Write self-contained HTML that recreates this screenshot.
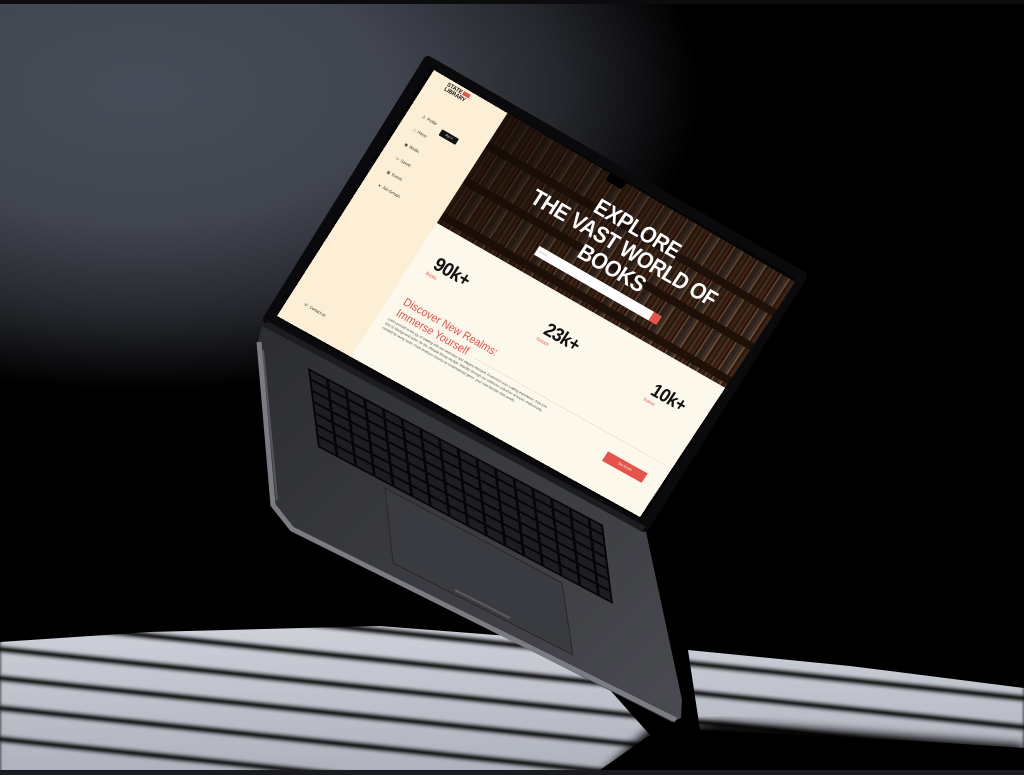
<!DOCTYPE html>
<html><head><meta charset="utf-8"><style>
html,body{margin:0;padding:0;background:#000;}
#root{position:relative;width:1024px;height:775px;overflow:hidden;font-family:"Liberation Sans",sans-serif;
background:radial-gradient(ellipse 560px 300px at 140px 90px,#474c58 0%,#41454f 45%,#25272d 75%,#000 100%),#000;}
svg{position:absolute;left:0;top:0;}
#kb{position:absolute;left:0;top:0;width:300px;height:80px;transform-origin:0 0;
transform:matrix(0.983,0.523,0.125,0.9875,308,368);
background-color:#1d1e21;
background-image:repeating-linear-gradient(90deg,transparent 0 16px,#060607 16px 19px),repeating-linear-gradient(0deg,transparent 0 9px,#060607 9px 11.4px);
border:2px solid #060607;box-sizing:border-box;}
#scr{position:absolute;left:0;top:0;width:800px;height:500px;transform-origin:0 0;
transform:matrix3d(0.48875,0.2783,0,0.000047175,-0.30812,0.4987,0,0.00002121,0,0,1,0,434,70,0,1);background:#fdf8ec;overflow:hidden;}
#side{position:absolute;left:0;top:0;width:158px;height:500px;background:#fcefd6;}
#hero{position:absolute;left:158px;top:0;width:642px;height:224px;
background:
linear-gradient(135deg,rgba(20,10,5,.85) 0%,rgba(25,12,6,.6) 50%,rgba(25,12,6,.4) 100%),
repeating-linear-gradient(180deg,transparent 0 58px,#24150a 58px 72px),
repeating-linear-gradient(90deg,#5a3a22 0 6px,#2b1a10 6px 9px,#6e5236 9px 14px,#3d2a1a 14px 18px,#7a3828 18px 22px,#2a1a10 22px 26px,#9c8260 26px 29px,#4a3020 29px 35px,#2f3f4a 35px 39px,#6a4a30 39px 45px,#a89070 45px 48px,#3a2418 48px 53px);}
.t{position:absolute;white-space:nowrap;}
</style></head><body><div id="root">
<svg width="1024" height="775" viewBox="0 0 1024 775">
<defs>
<filter id="b6"><feGaussianBlur stdDeviation="5"/></filter>
<filter id="b2"><feGaussianBlur stdDeviation="1.5"/></filter>
<linearGradient id="fl" x1="0" y1="0" x2="0" y2="1"><stop offset="0" stop-color="#d3d6de"/><stop offset="1" stop-color="#aeb2bc"/></linearGradient>
<linearGradient id="deck" x1="0" y1="0" x2="1" y2="1"><stop offset="0" stop-color="#2c2d31"/><stop offset=".6" stop-color="#3d3e43"/><stop offset="1" stop-color="#4a4b50"/></linearGradient>
<clipPath id="lc"><polygon points="0,642 150,632 380,626 560,640 610,690 650,735 600,770 0,770"/><polygon points="688,650 850,666 1024,688 1024,748 900,740 700,730"/></clipPath>
</defs>
<rect x="0" y="0" width="1024" height="4" fill="#0c0c0e"/>
<g clip-path="url(#lc)" filter="url(#b2)">
<rect x="0" y="600" width="1024" height="175" fill="url(#fl)"/>
<g stroke="#0b0b0d" stroke-width="7">
<line x1="-20" y1="647" x2="1040" y2="758"/>
<line x1="-20" y1="676" x2="1040" y2="787"/>
<line x1="-20" y1="706" x2="1040" y2="817"/>
<line x1="-20" y1="737" x2="1040" y2="848"/>
<line x1="-20" y1="618" x2="1040" y2="729"/>
<line x1="-20" y1="589" x2="1040" y2="700"/>
</g>
</g>
<polygon points="600,775 650,728 720,722 1024,745 1024,775" fill="#030304" filter="url(#b6)"/>
<rect x="0" y="770" width="1024" height="5" fill="#1a1b1e"/>
<polygon points="262,326 257,345 272,505 292,530 672,722 681,718 682,700 645,527" fill="url(#deck)"/>
<path d="M259,342 L273,505 L292,529 L676,720" fill="none" stroke="#7b7c83" stroke-width="5" stroke-linejoin="round"/>
<path d="M263,350 L277,500" stroke="#55565c" stroke-width="2"/>
<polygon points="385,488 393,563 573,655 562,583" fill="#3a3b40" stroke="#27282c" stroke-width="1"/>
<path d="M455,590 L510,618" stroke="#5a5b60" stroke-width="2"/>
<polygon points="428,61 802,276 644,527 268,319" fill="#050506" stroke="#0a0a0c" stroke-width="10" stroke-linejoin="round"/>
<path d="M266,324 L644,529" stroke="#1c1d20" stroke-width="6"/>
</svg>
<div id="kb"></div>
<div id="scr">
<div id="side">
<div class="t" style="left:35px;top:5px;font-weight:bold;font-size:10px;line-height:9px;color:#111;">STATE<span style="display:inline-block;width:14px;height:7px;background:#e5534b;margin-left:2px;"></span><br>LIBRARY</div>
<div class="t" style="left:28px;top:74px;font-size:7px;color:#333;">♙&nbsp; Profile</div>
<div class="t" style="left:28px;top:102px;font-size:7px;color:#333;">⌂&nbsp; Home</div>
<div class="t" style="left:28px;top:130px;font-size:7px;color:#333;">▣&nbsp; Books</div>
<div class="t" style="left:28px;top:158px;font-size:7px;color:#333;">▭&nbsp; Saved</div>
<div class="t" style="left:28px;top:186px;font-size:7px;color:#333;">▦&nbsp; Events</div>
<div class="t" style="left:28px;top:214px;font-size:7px;color:#333;">●&nbsp; Join Groups</div>
<div class="t" style="left:72px;top:80px;width:36px;height:12px;background:#111;border-radius:2px;color:#eee;font-size:5px;line-height:12px;text-align:center;">Sign in</div>
<div class="t" style="left:30px;top:455px;font-size:7px;color:#333;">☏&nbsp; Contact us</div>
</div>
<div id="hero"></div>
<div class="t" style="left:180px;top:39px;width:610px;text-align:center;color:#fff;font-weight:bold;font-size:40px;line-height:41px;letter-spacing:-1px;">EXPLORE<br>THE VAST WORLD OF<br>BOOKS</div>
<div class="t" style="left:345px;top:170px;width:255px;height:18px;background:#fff;font-size:5px;color:#aaa;line-height:18px;padding-left:6px;box-sizing:border-box;">Search</div>
<div class="t" style="left:600px;top:170px;width:18px;height:18px;background:#e5534b;"></div>
<div class="t" style="left:196px;top:266px;font-weight:bold;font-size:34px;color:#111;letter-spacing:-1px;">90k+</div>
<div class="t" style="left:192px;top:304px;font-size:8px;color:#e5534b;">Books</div>
<div class="t" style="left:441px;top:270px;font-weight:bold;font-size:34px;color:#111;letter-spacing:-1px;">23k+</div>
<div class="t" style="left:437px;top:308px;font-size:8px;color:#e5534b;">Groups</div>
<div class="t" style="left:681px;top:270px;font-weight:bold;font-size:34px;color:#111;letter-spacing:-1px;">10k+</div>
<div class="t" style="left:677px;top:308px;font-size:8px;color:#e5534b;">Events</div>
<div class="t" style="left:186px;top:359px;font-size:20px;line-height:23px;color:#e5534b;">Discover New Realms:<br>Immerse Yourself</div>
<div class="t" style="left:178px;top:406px;width:360px;white-space:normal;font-size:6.5px;line-height:9px;color:#555;">Lose yourself in the joy of reading with our seamless and elegant interface. Customize your reading experience, from font size to background color, for the ultimate library escape. Wander through our extensive collection of books, meticulously curated for every taste. From timeless classics to contemporary gems, your next favorite read awaits.</div>
<div class="t" style="left:358px;top:396px;width:430px;height:1px;background:#e6d9c2;"></div>
<div class="t" style="left:675px;top:425px;width:90px;height:20px;background:#e5534b;color:#fff;font-size:6px;line-height:20px;text-align:center;">See Events</div>
<div class="t" style="left:382px;top:0;width:36px;height:14px;background:#000;border-radius:0 0 4px 4px;"></div>
</div>
</div></body></html>
